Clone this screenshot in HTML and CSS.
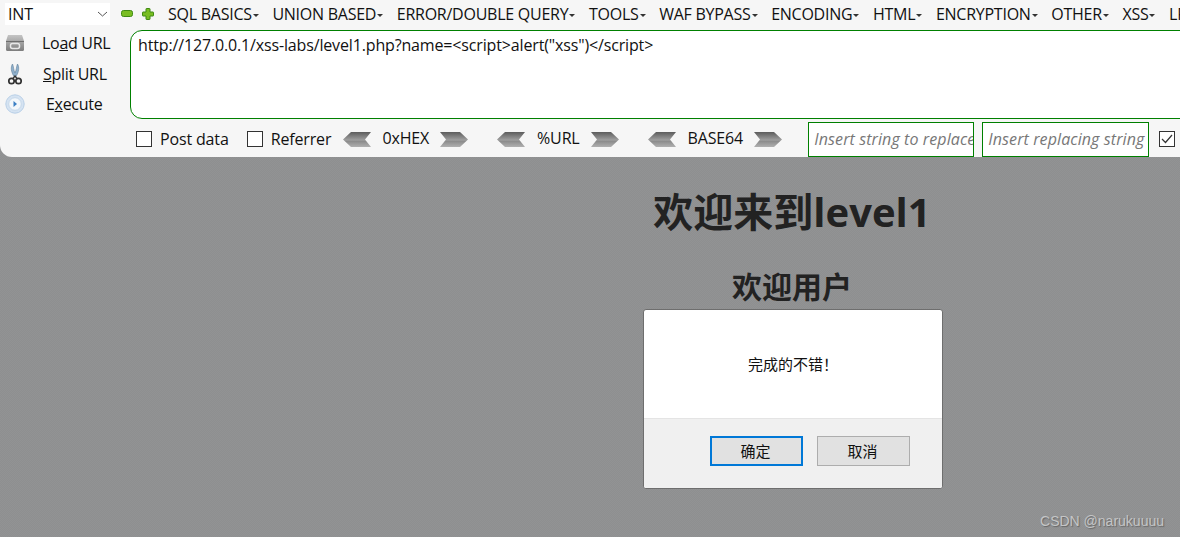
FILE: index.html
```html
<!DOCTYPE html>
<html lang="en">
<head>
    <meta charset="UTF-8">
    <title>欢迎来到level1</title>
    <link rel="stylesheet" href="styles.css">
</head>
<body>
    <svg class="defs" width="0" height="0">
        <defs>
            <linearGradient id="chevronFill" x1="0" y1="0" x2="0" y2="1">
                <stop offset="0" stop-color="#5c5c5c"/>
                <stop offset="0.55" stop-color="#a0a0a0"/>
                <stop offset="0.6" stop-color="#8a8a8a"/>
                <stop offset="1" stop-color="#b0b0b0"/>
            </linearGradient>
            <linearGradient id="driveFill" x1="0" y1="0" x2="0" y2="1">
                <stop offset="0" stop-color="#c4c4c4"/>
                <stop offset="1" stop-color="#7d7d7d"/>
            </linearGradient>
        </defs>
    </svg>

    <div class="toolbar">
        <div class="menu-row">
            <div class="int-select">
                <span>INT</span>
                <svg width="11" height="6" viewBox="0 0 11 6"><path d="M1 1l4.500 4L10 1" fill="none" stroke="#555" stroke-width="1"/></svg>
            </div>
            <svg class="zoom-icon minus" width="12" height="7" viewBox="0 0 12 7"><rect x="0.5" y="0.5" width="11" height="6" rx="2" fill="#79bd22" stroke="#3f8a12"/></svg>
            <svg class="zoom-icon plus" width="12" height="12" viewBox="0 0 12 12"><path d="M4.500 .5h3a.5 .5 0 0 1 .5.500v3h3a.5 .5 0 0 1 .5.500v3a.5 .5 0 0 1-.5.500H8v3a.5 .5 0 0 1-.5.500h-3a.5 .5 0 0 1-.5-.5V8H1a.5 .5 0 0 1-.5-.5v-3A.5 .5 0 0 1 1 4h3V1a.5 .5 0 0 1 .5-.5z" fill="#79bd22" stroke="#3f8a12"/></svg>
            <div class="menu">
                <span class="menu-item">SQL BASICS</span>
                <span class="menu-item">UNION BASED</span>
                <span class="menu-item">ERROR/DOUBLE QUERY</span>
                <span class="menu-item">TOOLS</span>
                <span class="menu-item">WAF BYPASS</span>
                <span class="menu-item">ENCODING</span>
                <span class="menu-item">HTML</span>
                <span class="menu-item">ENCRYPTION</span>
                <span class="menu-item">OTHER</span>
                <span class="menu-item">XSS</span>
                <span class="menu-item">LFI</span>
            </div>
        </div>

        <div class="url-row">
            <div class="actions">
                <div class="action">
                    <svg width="20" height="18" viewBox="0 0 20 18">
                        <path d="M3 1h14l2 6v8.500a1.500 1.500 0 0 1-1.500 1.500h-15A1.500 1.500 0 0 1 1 15.500V7z" fill="url(#driveFill)"/>
                        <rect x="1" y="7" width="18" height="1" fill="#6e6e6e"/>
                        <rect x="5.500" y="9.500" width="9" height="5" rx="2" fill="none" stroke="#e8e8e8" stroke-width="1.500"/>
                    </svg>
                    <span class="action-label load">Lo<u>a</u>d URL</span>
                </div>
                <div class="action">
                    <svg width="20" height="22" viewBox="0 0 20 22">
                        <path d="M7.500 1c-2 3-1.500 8 1.500 12.500L10 12l1 1.500c3-4.500 3.500-9.500 1.500-12.500-1 2-1 6-2.500 9-1.500-3-1.500-7-2.500-9z" fill="#8fb0cc" stroke="#5f7f9a" stroke-width=".6"/>
                        <circle cx="6.500" cy="18" r="2.700" fill="none" stroke="#333" stroke-width="1.700"/>
                        <circle cx="13.500" cy="18" r="2.700" fill="none" stroke="#333" stroke-width="1.700"/>
                        <path d="M8 15.500l2-2.500 2 2.500" fill="none" stroke="#333" stroke-width="1.400"/>
                    </svg>
                    <span class="action-label split"><u>S</u>plit URL</span>
                </div>
                <div class="action">
                    <svg width="20" height="20" viewBox="0 0 20 20">
                        <circle cx="10" cy="10" r="9.200" fill="#d5e3f2" stroke="#b9cfe6"/>
                        <circle cx="10" cy="10" r="6.300" fill="#f3f7fb" stroke="#c6d8ea"/>
                        <path d="M8.500 7l3.500 3-3.500 3z" fill="#3b7fc4"/>
                    </svg>
                    <span class="action-label exec">E<u>x</u>ecute</span>
                </div>
            </div>
            <div class="url-box">http://127.0.0.1/xss-labs/level1.php?name=&lt;script&gt;alert("xss")&lt;/script&gt;</div>
        </div>

        <div class="options-row">
            <label class="check post"><span class="box"></span>Post data</label>
            <label class="check referrer"><span class="box"></span>Referrer</label>

            <div class="codec hex">
                <svg width="28" height="15" viewBox="0 0 28 15"><path d="M0 7.500L8 0h20l-6 7.500 6 7.500H8z" fill="url(#chevronFill)"/></svg>
                <span class="codec-name">0xHEX</span>
                <svg width="28" height="15" viewBox="0 0 28 15"><path d="M28 7.500L20 0H0l6 7.500L0 15h20z" fill="url(#chevronFill)"/></svg>
            </div>
            <div class="codec url">
                <svg width="28" height="15" viewBox="0 0 28 15"><path d="M0 7.500L8 0h20l-6 7.500 6 7.500H8z" fill="url(#chevronFill)"/></svg>
                <span class="codec-name">%URL</span>
                <svg width="28" height="15" viewBox="0 0 28 15"><path d="M28 7.500L20 0H0l6 7.500L0 15h20z" fill="url(#chevronFill)"/></svg>
            </div>
            <div class="codec base">
                <svg width="28" height="15" viewBox="0 0 28 15"><path d="M0 7.500L8 0h20l-6 7.500 6 7.500H8z" fill="url(#chevronFill)"/></svg>
                <span class="codec-name">BASE64</span>
                <svg width="28" height="15" viewBox="0 0 28 15"><path d="M28 7.500L20 0H0l6 7.500L0 15h20z" fill="url(#chevronFill)"/></svg>
            </div>

            <div class="replace-box first">Insert string to replace</div>
            <div class="replace-box second">Insert replacing string</div>
            <span class="box checked">
                <svg width="12" height="10" viewBox="0 0 12 10"><path d="M1 5l3.500 3.500L11 1" fill="none" stroke="#333" stroke-width="1.200"/></svg>
            </span>
        </div>
    </div>

    <div class="page">
        <h1>欢迎来到level1</h1>
        <h2>欢迎用户</h2>
    </div>

    <div class="dialog">
        <div class="dialog-body">完成的不错！</div>
        <div class="dialog-footer">
            <button class="primary">确定</button>
            <button>取消</button>
        </div>
    </div>

    <div class="watermark">CSDN @narukuuuu</div>
</body>
</html>
```

FILE: styles.css
```css
* {
    box-sizing: border-box;
}

html, body {
    height: 100%;
}

body {
    margin: 0;
    overflow: hidden;
    font-family: "Open Sans", "Noto Sans CJK SC", sans-serif;
    color: #111;
    background-color: #8f9091;
    background-image: repeating-conic-gradient(#8e8f90 0 25%, #929394 0 50%);
    background-size: 2px 2px;
}

.defs {
    position: absolute;
}

/* hackbar */
.toolbar {
    height: 157px;
    width: 1180px;
    background-color: #f6f6f6;
    border-bottom-left-radius: 12px;
    overflow: hidden;
    font-size: 16px;
    letter-spacing: -0.15px;
}

.menu-row {
    display: flex;
    align-items: center;
    height: 30px;
    padding: 0 0 3px 5px;
    white-space: nowrap;
}

.int-select {
    flex: none;
    width: 105px;
    height: 22px;
    background-color: #fff;
    display: flex;
    align-items: center;
    justify-content: space-between;
    padding: 0 2px 0 3px;
}

.zoom-icon {
    flex: none;
}

.zoom-icon.minus {
    margin-left: 11px;
}

.zoom-icon.plus {
    margin-left: 9px;
}

.menu {
    display: flex;
    gap: 13.6px;
    margin-left: 14px;
    letter-spacing: -0.25px;
}

.menu-item {
    flex: none;
}

.menu-item::after {
    content: '';
    display: inline-block;
    margin-left: 1px;
    vertical-align: 3px;
    border-left: 3px solid transparent;
    border-right: 3px solid transparent;
    border-top: 3px solid #333;
}

.url-row {
    display: flex;
    height: 89px;
}

.actions {
    width: 130px;
    padding: 2px 0 0 5px;
    display: flex;
    flex-direction: column;
    gap: 8.5px;
}

.action {
    display: flex;
    align-items: center;
    height: 22px;
    letter-spacing: -0.3px;
}

.action-label.load {
    margin-left: 17px;
}

.action-label.split {
    margin-left: 18px;
}

.action-label.exec {
    margin-left: 21px;
}

.url-box {
    flex: 1;
    margin-right: -20px;
    background-color: #fff;
    border: 1px solid #008000;
    border-radius: 12px;
    padding: 3px 7px;
}

.options-row {
    display: flex;
    align-items: center;
    height: 38px;
    padding: 3px 0 1px 136px;
}

.box {
    display: inline-flex;
    align-items: center;
    justify-content: center;
    width: 16px;
    height: 16px;
    border: 1px solid #333;
    background-color: #fff;
    flex: none;
}

.check {
    display: flex;
    align-items: center;
    gap: 8px;
}

.check.referrer {
    margin-left: 18px;
}

.codec {
    display: flex;
    align-items: center;
    flex: none;
    justify-content: space-between;
}

.codec-name {
    position: relative;
    top: -1px;
}

.codec.hex {
    margin-left: 12px;
    width: 125px;
}

.codec.url {
    margin-left: 29px;
    width: 122px;
}

.codec.base {
    margin-left: 29px;
    width: 134px;
}

.replace-box {
    height: 35px;
    background-color: #fff;
    border: 1px solid #008000;
    padding: 0 0 0 5px;
    line-height: 33px;
    font-style: italic;
    letter-spacing: 0.1px;
    color: #777;
    overflow: hidden;
    white-space: nowrap;
    flex: none;
}

.replace-box.first {
    width: 166px;
    margin-left: 26px;
}

.replace-box.second {
    width: 167px;
    margin-left: 8px;
}

.box.checked {
    margin-left: 10px;
}

/* page behind the dialog */
.page {
    margin-left: 404px;
    width: 776px;
    text-align: center;
    color: #222;
}

.page h1 {
    margin: 28px 0 0;
    font-size: 40px;
    line-height: 54px;
    font-weight: 700;
}

.page h2 {
    margin: 27px 0 0;
    font-size: 30px;
    line-height: 42px;
    font-weight: 700;
}

/* alert box */
.dialog {
    position: absolute;
    left: 643px;
    top: 309px;
    width: 300px;
    height: 180px;
    background-color: #fff;
    border: 1px solid #6e6e6e;
    border-radius: 3px;
    overflow: hidden;
    font-size: 15px;
    display: flex;
    flex-direction: column;
}

.dialog-body {
    height: 108px;
    display: flex;
    align-items: center;
    justify-content: center;
    padding-bottom: 2px;
}

.dialog-footer {
    flex: 1;
    background-color: #f0f0f0;
    border-top: 1px solid #e4e4e4;
    display: flex;
    justify-content: flex-end;
    align-items: flex-start;
    gap: 14px;
    padding: 17px 32px 0 0;
}

.dialog-footer button {
    width: 93px;
    height: 30px;
    background-color: #e1e1e1;
    border: 1px solid #adadad;
    font-family: inherit;
    font-size: 15px;
    color: #111;
    padding: 0 2px 2px 0;
}

.dialog-footer button.primary {
    border: 2px solid #0078d7;
}

.watermark {
    position: absolute;
    right: 16px;
    bottom: 8px;
    font-family: "Liberation Sans", sans-serif;
    font-size: 14px;
    color: #c4c5c6;
    text-shadow: 1px 1px 1px #666;
}
```
